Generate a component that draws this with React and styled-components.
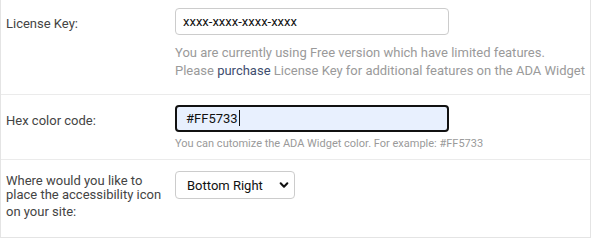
import React from "react";
import styled, { createGlobalStyle } from "styled-components";

const GlobalStyle = createGlobalStyle`
  body {
    margin: 0;
    background: #fff;
    font-family: Roboto, "Liberation Sans", sans-serif;
  }
`;

const Table = styled.div`
  width: 591px;
  height: 238px;
  box-sizing: border-box;
  border: 1px solid #e4e4e4;
  border-top: none;
  display: flex;
  flex-direction: column;
`;

const Row = styled.div`
  display: grid;
  grid-template-columns: 174px 1fr;
  height: ${(p) => p.h}px;
  box-sizing: border-box;
  border-bottom: ${(p) => (p.last ? "none" : "1px solid #ebebeb")};
`;

const Label = styled.div`
  padding: ${(p) => p.pad || "17px 0 0 5px"};
  font-size: 13px;
  line-height: ${(p) => p.lh || "16px"};
  color: #444;
`;

const LabelLine = styled.span`
  display: block;
  margin-top: ${(p) => p.mt || 0}px;
`;

const Field = styled.div`
  padding-top: ${(p) => p.top}px;
  display: flex;
  flex-direction: column;
  align-items: flex-start;
`;

const TextInput = styled.input`
  box-sizing: border-box;
  width: 274px;
  height: 27px;
  padding: 0 7px;
  font-family: Roboto, "Liberation Sans", sans-serif;
  font-size: 13px;
  color: #111;
  background: #fff;
  border: 1px solid #ccc;
  border-radius: 4px;
  outline: none;
  margin: 0;
`;

const Value = styled.div`
  box-sizing: border-box;
  width: 274px;
  height: 27px;
  padding: 0 9px;
  display: flex;
  align-items: center;
  font-size: 13px;
  color: #111;
  background: #e8f0fe;
  border: 2px solid #111;
  border-radius: 4px;
`;

const Caret = styled.span`
  width: 1px;
  height: 16px;
  margin-left: 1px;
  background: #111;
  display: inline-block;
`;

const Help = styled.p`
  margin: ${(p) => p.m};
  font-size: ${(p) => p.fs}px;
  line-height: ${(p) => p.lh}px;
  color: #9a9a9a;
`;

const Link = styled.a`
  color: #3e4d6e;
  text-decoration: none;
`;

const Select = styled.div`
  box-sizing: border-box;
  width: 120px;
  height: 28px;
  padding: 0 5px 0 11px;
  display: flex;
  align-items: center;
  justify-content: space-between;
  border: 1px solid #ccc;
  border-radius: 4px;
  font-size: 13px;
  color: #111;
`;

export default function App() {
  return (
    <>
      <GlobalStyle />
      <Table>
        <Row h={95}>
          <Label pad="16px 0 0 5px">License Key:</Label>
          <Field top={8}>
            <TextInput defaultValue="xxxx-xxxx-xxxx-xxxx" />
            <Help m="9px 0 0 0" fs={13} lh={18}>
              You are currently using Free version which have limited features.
              <br />
              Please <Link href="#">purchase</Link> License Key for additional
              features on the ADA Widget
            </Help>
          </Field>
        </Row>
        <Row h={66}>
          <Label pad="18px 0 0 5px">Hex color code:</Label>
          <Field top={10}>
            <Value>
              #FF5733
              <Caret />
            </Value>
            <Help m="5px 0 0 0" fs={11} lh={14}>
              You can cutomize the ADA Widget color. For example: #FF5733
            </Help>
          </Field>
        </Row>
        <Row h={77} last>
          <Label pad="14px 0 0 5px" lh="14px">
            <LabelLine>Where would you like to</LabelLine>
            <LabelLine>place the accessibility icon</LabelLine>
            <LabelLine mt={3}>on your site:</LabelLine>
          </Label>
          <Field top={11}>
            <Select>
              Bottom Right
              <svg width="10" height="10" viewBox="0 0 24 24" fill="none" stroke="#111" strokeWidth="5" strokeLinecap="round" strokeLinejoin="round">
                <polyline points="4 8 12 16 20 8" />
              </svg>
            </Select>
          </Field>
        </Row>
      </Table>
    </>
  );
}
